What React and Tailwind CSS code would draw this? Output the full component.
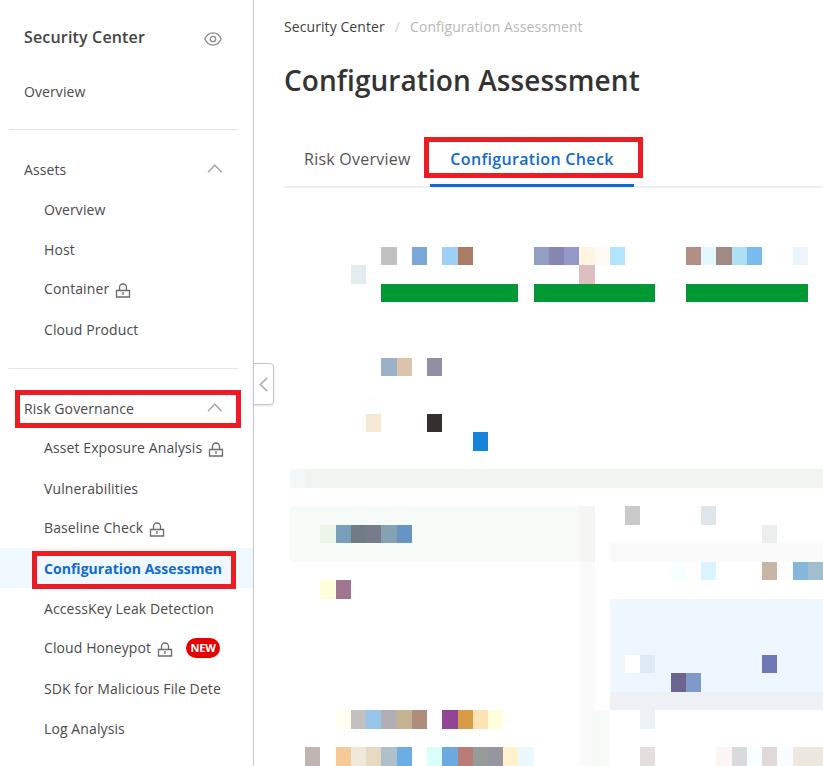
import React from 'react';

const LockIcon = () => (
  <svg className="ml-1.5 mt-1 h-4 w-4 shrink-0" viewBox="0 0 16 16" fill="none" stroke="#6b6b6b" strokeWidth="1.3">
    <path d="M1.500 7.500h13v6.500h-13zM4.500 7.500V4.500a3.500 3.500 0 0 1 7 0v3M8 9v3" />
  </svg>
);

const EyeIcon = () => (
  <svg className="mt-[3px] h-[14px] w-[18px]" viewBox="0 0 18 14" fill="none" stroke="#8c8c8c" strokeWidth="1.3">
    <path d="M.8 7C2.6 3 5.5.9 9 .9S15.400 3 17.200 7C15.400 11 12.500 13.100 9 13.100S2.600 11 .8 7z" />
    <circle cx="9" cy="7" r="2.700" />
  </svg>
);

const ChevronUp = () => (
  <svg className="mb-[3px] h-[9px] w-[15px]" viewBox="0 0 15 9" fill="none" stroke="#a9a9a9" strokeWidth="1.5">
    <path d="M1 8.200 7.800 1.200 14.600 8.200" />
  </svg>
);

const HighlightBox = ({ className }) => (
  <div className={`pointer-events-none absolute z-10 border-[5px] border-[#ed1c24] ${className}`} />
);

const assets = [
  { label: 'Overview' },
  { label: 'Host' },
  { label: 'Container', locked: true },
  { label: 'Cloud Product' },
];

const risks = [
  { label: 'Asset Exposure Analysis', locked: true },
  { label: 'Vulnerabilities' },
  { label: 'Baseline Check', locked: true },
  { label: 'Configuration Assessmen', active: true },
  { label: 'AccessKey Leak Detection' },
  { label: 'Cloud Honeypot', locked: true, isNew: true },
  { label: 'SDK for Malicious File Dete' },
  { label: 'Log Analysis' },
];

const MenuItem = ({ label, locked, active, isNew, lowered }) => (
  <li
    className={`relative flex h-10 items-center whitespace-nowrap pl-11 ${
      active ? 'bg-[#eff7ff] font-bold text-[#0f6bd0] tracking-[0.03px]' : ''
    } ${locked ? 'pb-[2px]' : ''} ${lowered ? 'pt-px' : ''}`}
  >
    <span>{label}</span>
    {locked && <LockIcon />}
    {isNew && (
      <span className="ml-[13px] flex h-5 w-[34px] items-center justify-center rounded-full bg-[#e60000] text-[11px] font-bold tracking-[-0.2px] text-white">
        NEW
      </span>
    )}
    {active && <HighlightBox className="left-8 top-[3px] h-[38px] w-[204px]" />}
  </li>
);

const MenuGroup = ({ title, items, highlighted }) => (
  <div>
    <div className={`relative flex h-10 items-center justify-between pl-6 pr-[31px] ${highlighted ? 'pt-px' : ''}`}>
      <span>{title}</span>
      <ChevronUp />
      {highlighted && <HighlightBox className="left-[15px] top-[2px] h-[38px] w-[226px]" />}
    </div>
    <ul>
      {items.map((item) => (
        <MenuItem key={item.label} lowered={highlighted} {...item} />
      ))}
    </ul>
  </div>
);

const Divider = () => <hr className="ml-[9px] w-[229px] border-[#e5e5e5]" />;

const Sidebar = () => (
  <aside className="relative h-full w-[254px] shrink-0 border-r border-[#c3c8ce] text-sm tracking-[0.1px] text-[#4a4a4a]">
    <div className="flex h-[71px] items-center justify-between pl-6 pr-[31px] pt-[3px]">
      <h2 className="text-base font-semibold tracking-[0.17px] text-[#444]">Security Center</h2>
      <EyeIcon />
    </div>
    <div className="flex h-10 items-center pl-6 pt-px">Overview</div>
    <div className="pb-5 pt-[18px]"><Divider /></div>
    <MenuGroup title="Assets" items={assets} />
    <div className="pb-[19px] pt-[18px]"><Divider /></div>
    <MenuGroup title="Risk Governance" items={risks} highlighted />
    <button className="absolute left-[253px] top-[363px] flex h-[42px] w-[21px] items-center justify-center rounded-r-sm border border-[#c3c8ce] bg-white shadow">
      <svg className="h-[15px] w-[9px]" viewBox="0 0 9 15" fill="none" stroke="#b5b5b5" strokeWidth="1.800">
        <path d="M8.200.8 1.200 7.500l7 6.700" />
      </svg>
    </button>
  </aside>
);

// [row, column, color, column span, row span]
const blocks = [
  [1, 7, '#c1c1c1'], [1, 9, '#79a7d7'], [1, 11, '#9ed0f6'], [1, 12, '#aa7d66'],
  [1, 17, '#929fc5'], [1, 18, '#8985b3'], [1, 19, '#9398c9'], [1, 20, '#fff5e1'], [1, 21, '#fffaf3'], [1, 22, '#b0e4ff'],
  [1, 27, '#b18f85'], [1, 28, '#e3f7ff'], [1, 29, '#a18984'], [1, 30, '#ade0f2'], [1, 31, '#79bbee'], [1, 33, '#fcfffe'], [1, 34, '#ecf4fc'],
  [2, 5, '#e3ecee'], [2, 20, '#ddbfc1'],
  [3, 7, '#009933', 9], [3, 17, '#009933', 8], [3, 27, '#009933', 8],
  [7, 7, '#9cb1c7'], [7, 8, '#dcc3ac'], [7, 10, '#928ea3'],
  [9, 6, '#fcfeff'],
  [10, 6, '#f4e9d5'], [10, 10, '#35302f'],
  [11, 13, '#1583d7'],
  [13, 1, '#f2f7f8'], [13, 2, '#f2f4f1', 34],
  [15, 1, '#f6fbf8', 19, 3], [15, 20, '#f5f6f4', 1, 3],
  [15, 23, '#cacaca'], [15, 28, '#dfe6e9'],
  [16, 3, '#ebf5e8'], [16, 4, '#789fba'], [16, 5, '#707b84'], [16, 6, '#777c8a'], [16, 7, '#84a2b3'], [16, 8, '#6694c3'],
  [16, 32, '#eceeed'],
  [17, 22, '#fafafa', 14],
  [18, 20, '#fafafa', 1, 11],
  [18, 26, '#f7ffff'], [18, 28, '#daf3ff'], [18, 32, '#c7b5a6'], [18, 34, '#85b6dc'], [18, 35, '#a1becf'],
  [19, 3, '#fcffda'], [19, 4, '#a17690'],
  [20, 22, '#eef7ff', 14, 5],
  [23, 23, '#ffffff'], [23, 24, '#dfe9f4'], [23, 32, '#6e78b5'],
  [24, 26, '#6c668f'], [24, 27, '#7f9aca'],
  [25, 22, '#edf1f5', 14],
  [26, 4, '#fffff3'], [26, 5, '#c1c1c1'], [26, 6, '#98c5ea'], [26, 7, '#b3adb5'], [26, 8, '#c6b391'], [26, 9, '#ae8d7d'],
  [26, 11, '#924595'], [26, 12, '#d99c46'], [26, 13, '#ffe2b2'], [26, 14, '#ffffdd'],
  [26, 21, '#f6fbf8', 1, 3], [26, 24, '#ecf2f5'],
  [28, 2, '#c1b5b1'], [28, 4, '#f5ca98'], [28, 5, '#f0e9d9'], [28, 6, '#e7dac3'], [28, 7, '#afc0ca'], [28, 8, '#6caee3'],
  [28, 10, '#dafffb'], [28, 11, '#6ca9df'], [28, 12, '#ba7a75'], [28, 13, '#959b99'], [28, 14, '#9695a1'], [28, 15, '#fff2cc'], [28, 16, '#ebf9ff'],
  [28, 24, '#e4dedf'], [28, 29, '#fbf6f3'], [28, 30, '#d8dadb'], [28, 31, '#f8ffff'], [28, 32, '#e0dbda'], [28, 33, '#fafcff'], [28, 34, '#ede8df'], [28, 35, '#ede8df'],
];

const MosaicPanel = () => (
  <div className="ml-1.5 mt-[58.6px] grid w-[533px] grid-cols-[repeat(35,minmax(0,1fr))] grid-rows-[repeat(28,18.55px)]">
    {blocks.map(([row, col, color, colSpan = 1, rowSpan = 1]) => (
      <div
        key={`${row}-${col}`}
        style={{
          gridRow: `${row} / span ${rowSpan}`,
          gridColumn: `${col} / span ${colSpan}`,
          backgroundColor: color,
        }}
      />
    ))}
  </div>
);

const App = () => (
  <div className="flex h-[766px] w-[823px] overflow-hidden bg-white font-['Open_Sans','Noto_Sans',sans-serif]">
    <Sidebar />
    <main className="min-w-0 flex-1 pl-[30px]">
      <nav className="flex h-[54px] items-center whitespace-nowrap pb-[2px] text-[14px] tracking-[0.08px]">
        <span className="text-[#404040]">Security Center</span>
        <span className="mx-[10px] text-[#ccc]">/</span>
        <span className="text-[#b8b8b8]">Configuration Assessment</span>
      </nav>
      <h1 className="flex h-[52px] items-center whitespace-nowrap text-[28px] font-semibold tracking-[0.07px] text-[#333]">
        Configuration Assessment
      </h1>
      <div className="mt-[26px] flex h-14 border-b-2 border-[#eee] text-base">
        <div className="flex w-[146px] items-center whitespace-nowrap pl-5 text-[#555] tracking-[0.25px]">Risk Overview</div>
        <div className="relative -mb-[1px] flex w-[204px] items-center justify-center whitespace-nowrap border-b-[3px] border-[#0f6bd0] pt-[2px] font-semibold text-[#0f6bd0] tracking-[0.33px]">
          Configuration Check
          <HighlightBox className="-left-1.5 top-[5px] h-[41px] w-[219px]" />
        </div>
      </div>
      <MosaicPanel />
    </main>
  </div>
);

export default App;
